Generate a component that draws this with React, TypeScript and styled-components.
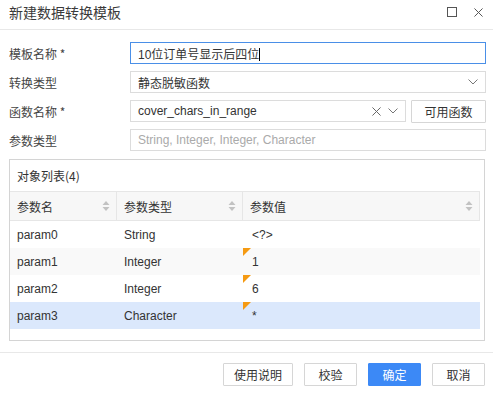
import React from "react";
import styled, { createGlobalStyle } from "styled-components";

const Global = createGlobalStyle`
  html, body { margin: 0; padding: 0; background: #fff; }
  body { font-family: "Liberation Sans", Arial, "Noto Sans CJK SC", sans-serif; color: #333; }
  * { box-sizing: border-box; }
`;

const Dialog = styled.div`
  width: 493px;
  height: 396px;
  background: #fff;
  display: flex;
  flex-direction: column;
`;

const Header = styled.div`
  height: 30px;
  border-bottom: 1px solid #e8e8e8;
  display: flex;
  align-items: center;
  padding: 0 10px 0 9px;
`;

const Title = styled.div`
  flex: 1;
  font-size: 14px;
  color: #3a3a3a;
  font-family: "Noto Sans CJK SC", sans-serif;
  margin-top: -6px;
`;

const HeaderIcons = styled.div`
  display: flex;
  align-items: center;
  gap: 17px;
  margin-top: -5px;
`;

const Form = styled.div`
  display: flex;
  flex-direction: column;
  gap: 7px;
  padding: 12px 7px 0 9px;
`;

const Row = styled.div`
  display: grid;
  grid-template-columns: 121px 1fr;
  align-items: center;
  height: 22px;
`;

const Label = styled.div`
  font-size: 12px;
  color: #444;
  font-family: "Noto Sans CJK SC", sans-serif;
`;

const Field = styled.div<{ $focus?: boolean; $disabled?: boolean }>`
  height: 22px;
  border: 1px solid ${(p) => (p.$focus ? "#4a8fe7" : "#dcdcdc")};
  background: #fff;
  display: flex;
  align-items: center;
  padding: 0 7px;
  font-size: 12px;
  color: ${(p) => (p.$disabled ? "#aaa" : "#333")};
  flex: 1;
  min-width: 0;
`;

const FieldText = styled.span`
  flex: 1;
  white-space: nowrap;
  font-family: "Liberation Sans", Arial, "Noto Sans CJK SC", sans-serif;
`;

const Caret = styled.span`
  display: inline-block;
  width: 1px;
  height: 13px;
  background: #000;
  vertical-align: -2px;
`;

const FieldGroup = styled.div`
  display: flex;
  gap: 5px;
`;

const Btn = styled.button<{ $primary?: boolean; $w?: number }>`
  height: 23px;
  width: ${(p) => p.$w ?? 53}px;
  border: 1px solid ${(p) => (p.$primary ? "#3c89f6" : "#d6d6d6")};
  background: ${(p) => (p.$primary ? "#3c89f6" : "#fff")};
  color: ${(p) => (p.$primary ? "#fff" : "#333")};
  font-size: 12px;
  font-family: "Noto Sans CJK SC", sans-serif;
  padding: 0;
  border-radius: 1px;
  display: flex;
  align-items: center;
  justify-content: center;
`;

const Panel = styled.div`
  margin: 8px 8px 0 9px;
  height: 182px;
  border: 1px solid #d4d4d4;
  display: flex;
  flex-direction: column;
`;

const PanelTitle = styled.div`
  height: 31px;
  padding-left: 7px;
  display: flex;
  align-items: center;
  font-size: 12px;
  font-family: "Noto Sans CJK SC", sans-serif;
  color: #333;
`;

const Table = styled.div`
  margin-right: 4px;
  display: grid;
  grid-template-columns: 107px 126px 1fr;
`;

const HeadCell = styled.div`
  height: 30px;
  background: #f7f7f7;
  border-top: 1px solid #e6e6e6;
  border-bottom: 1px solid #e6e6e6;
  border-right: 1px solid #e6e6e6;
  display: flex;
  align-items: center;
  padding: 0 6px 0 7px;
  font-size: 12px;
  font-family: "Noto Sans CJK SC", sans-serif;
  color: #333;
  justify-content: space-between;
`;

const Cell = styled.div<{ $bg: string; $marked?: boolean; $pad?: number }>`
  height: 27px;
  background: ${(p) => p.$bg};
  display: flex;
  align-items: center;
  padding-left: ${(p) => p.$pad ?? 7}px;
  font-size: 12px;
  color: #333;
  position: relative;
  &::before {
    content: "";
    display: ${(p) => (p.$marked ? "block" : "none")};
    position: absolute;
    left: 0;
    top: 0;
    width: 0;
    height: 0;
    border-top: 8px solid #f59a12;
    border-right: 8px solid transparent;
  }
`;

const Footer = styled.div`
  margin-top: 11px;
  border-top: 1px solid #e8e8e8;
  display: flex;
  justify-content: flex-end;
  gap: 11px;
  padding: 10px 8px 0 0;
`;

const SortIcon = () => (
  <svg width="8" height="12" viewBox="0 0 8 12">
    <path d="M4 1 L7.5 5 H0.5 Z" fill="#c2c2c2" />
    <path d="M4 11 L7.5 7 H0.5 Z" fill="#c2c2c2" />
  </svg>
);

const Chevron = () => (
  <svg width="10" height="6" viewBox="0 0 10 6">
    <path d="M0.5 0.5 L5 5 L9.5 0.5" fill="none" stroke="#777" strokeWidth="1" />
  </svg>
);

const Cross = ({ size = 9, color = "#666" }: { size?: number; color?: string }) => (
  <svg width={size} height={size} viewBox="0 0 10 10">
    <path d="M0.5 0.5 L9.5 9.5 M9.5 0.5 L0.5 9.5" stroke={color} strokeWidth="1.1" />
  </svg>
);

const rows = [
  { name: "param0", type: "String", val: "<?>", marked: false, bg: "#fff" },
  { name: "param1", type: "Integer", val: "1", marked: true, bg: "#f9f9f9" },
  { name: "param2", type: "Integer", val: "6", marked: true, bg: "#fff" },
  { name: "param3", type: "Character", val: "*", marked: true, bg: "#dbe8fc" },
];

export default function App() {
  return (
    <Dialog>
      <Global />
      <Header>
        <Title>新建数据转换模板</Title>
        <HeaderIcons>
          <svg width="10" height="10" viewBox="0 0 10 10">
            <rect x="0.5" y="0.5" width="9" height="9" fill="none" stroke="#555" strokeWidth="1" />
          </svg>
          <Cross size={9} color="#555" />
        </HeaderIcons>
      </Header>
      <Form>
        <Row>
          <Label>模板名称 *</Label>
          <Field $focus>
            <FieldText>
              10位订单号显示后四位
              <Caret />
            </FieldText>
          </Field>
        </Row>
        <Row>
          <Label>转换类型</Label>
          <Field>
            <FieldText>静态脱敏函数</FieldText>
            <Chevron />
          </Field>
        </Row>
        <Row>
          <Label>函数名称 *</Label>
          <FieldGroup>
            <Field>
              <FieldText>cover_chars_in_range</FieldText>
              <Cross size={9} color="#666" />
              <span style={{ width: 7 }} />
              <Chevron />
            </Field>
            <Btn $w={75}>可用函数</Btn>
          </FieldGroup>
        </Row>
        <Row>
          <Label>参数类型</Label>
          <Field $disabled>
            <FieldText>String, Integer, Integer, Character</FieldText>
          </Field>
        </Row>
      </Form>
      <Panel>
        <PanelTitle>对象列表(4)</PanelTitle>
        <Table>
          <HeadCell>
            参数名
            <SortIcon />
          </HeadCell>
          <HeadCell>
            参数类型
            <SortIcon />
          </HeadCell>
          <HeadCell>
            参数值
            <SortIcon />
          </HeadCell>
          {rows.map((r) => (
            <React.Fragment key={r.name}>
              <Cell $bg={r.bg}>{r.name}</Cell>
              <Cell $bg={r.bg}>{r.type}</Cell>
              <Cell $bg={r.bg} $marked={r.marked} $pad={9}>
                {r.val}
              </Cell>
            </React.Fragment>
          ))}
        </Table>
      </Panel>
      <Footer>
        <Btn $w={70}>使用说明</Btn>
        <Btn>校验</Btn>
        <Btn $primary>确定</Btn>
        <Btn>取消</Btn>
      </Footer>
    </Dialog>
  );
}
